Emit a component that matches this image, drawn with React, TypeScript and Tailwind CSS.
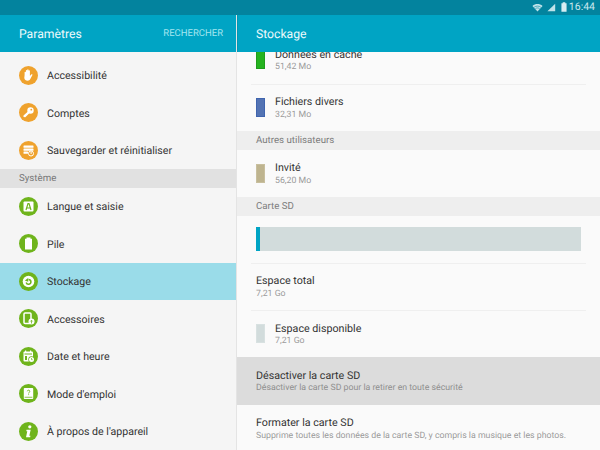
import React from "react";

const font: React.CSSProperties = { fontFamily: "Roboto, sans-serif", textRendering: "geometricPrecision" };

function Circle({ color, children }: { color: string; children: React.ReactNode }) {
  return (
    <svg width="19" height="19" viewBox="0 0 19 19" className="shrink-0">
      <circle cx="9.5" cy="9.5" r="9.5" fill={color} />
      {children}
    </svg>
  );
}

const O = "#efa22d";
const G = "#6fb41c";

const icons: Record<string, React.ReactNode> = {
  hand: (
    <path d="M5.600 9V6.300c0-.9 1.200-.9 1.300 0v1.900V4.600c0-.9 1.300-.9 1.300 0v3.300V3.900c0-.9 1.400-.9 1.400 0v4V4.800c0-.9 1.300-.9 1.300 0v5.200l1.300-1.500c.7-.7 1.600 0 1.100.7l-2 3.800c-.6 1-1.400 1.700-2.700 1.700-1.800 0-3-1-3.300-2.800z" fill="#fff" />
  ),
  key: (
    <g fill="#fff">
      <circle cx="11.500" cy="7.500" r="3.200" />
      <path d="M9.300 8.200l1.500 1.500-4.500 4.500-1.800-.2.000-1.500z" />
      <circle cx="12.300" cy="6.700" r=".9" fill={O} />
    </g>
  ),
  backup: (
    <g fill="#fff">
      <rect x="4.500" y="4.500" width="10" height="2.300" rx=".5" />
      <rect x="4.500" y="7.500" width="10" height="2.300" rx=".5" />
      <rect x="4.500" y="10.500" width="4.500" height="2.300" rx=".5" />
      <circle cx="12" cy="12.500" r="2.500" fill="none" stroke="#fff" strokeWidth="1" />
      <rect x="11.600" y="11" width="1" height="2" />
    </g>
  ),
  lang: (
    <g>
      <rect x="4.500" y="4.500" width="10" height="10" rx="1" fill="#fff" />
      <path d="M7 13l2-6.500h1L12 13M7.800 11h3.400" fill="none" stroke={G} strokeWidth="1.200" />
    </g>
  ),
  battery: <path d="M7.500 3.500h4v1.200h1.500v10.800H6V4.700h1.500z" fill="#fff" />,
  storage: (
    <g>
      <circle cx="9.500" cy="9.500" r="5.800" fill="#fff" />
      <path d="M9.500 7.500a2.400 2.400 0 1 1-2.300 3" fill="none" stroke={G} strokeWidth="1.500" />
      <path d="M5.800 8.600l3.400-2.600v3.800z" fill={G} />
    </g>
  ),
  acc: (
    <g>
      <rect x="5" y="4" width="7" height="10.500" rx="1" fill="none" stroke="#fff" strokeWidth="1.500" />
      <circle cx="12.500" cy="12.500" r="3" fill="#fff" />
      <path d="M12.500 14.500v-3M11.300 12.500l1.200-1.300 1.200 1.300" stroke={G} strokeWidth=".8" fill="none" />
    </g>
  ),
  date: (
    <g fill="#fff">
      <rect x="4.500" y="4.500" width="9.500" height="10" rx="1" />
      <rect x="6" y="3.500" width="1.200" height="2" />
      <rect x="11" y="3.500" width="1.200" height="2" />
      <rect x="5.500" y="6.500" width="7.500" height="1" fill={G} />
      <rect x="6" y="9" width="2" height="4" fill={G} />
      <circle cx="12.500" cy="12.500" r="3.200" fill={G} />
      <circle cx="12.500" cy="12.500" r="2.500" />
      <path d="M12.500 11v1.700h1.200" stroke={G} strokeWidth=".7" fill="none" />
    </g>
  ),
  guide: (
    <g>
      <rect x="4.800" y="4" width="9.400" height="11" rx=".8" fill="#fff" />
      <rect x="5.600" y="12.800" width="7.800" height=".8" fill={G} />
      <path d="M8.300 7.300c0-1.500 2.500-1.500 2.500 0 0 1-1.200 1-1.200 2.200M9.600 10.300v.8" stroke={G} strokeWidth=".9" fill="none" />
    </g>
  ),
  info: (
    <g fill="#fff">
      <circle cx="10.800" cy="4.800" r="1.600" />
      <path d="M7.500 7.800h4.200l-1.400 6h1.100l-.2 1.400H7l1.300-6H7.300z" />
    </g>
  ),
};

function NavRow({ icon, color = G, label, selected }: { icon: string; color?: string; label: string; selected?: boolean }) {
  return (
    <div className={`flex h-[37.5px] items-center gap-[9px] pl-[19px] ${selected ? "bg-[#9adce9]" : ""}`}>
      <Circle color={color}>{icons[icon]}</Circle>
      <span className="pt-[2px] text-[10.6px] text-[#333333]">{label}</span>
    </div>
  );
}

function NavSection({ label }: { label: string }) {
  return (
    <div className="flex h-[18.75px] items-center bg-[#e1e1e1] pl-[19px] pt-[1.5px] text-[9.7px] text-[#777777]">
      {label}
    </div>
  );
}

function Section({ label }: { label: string }) {
  return (
    <div className="flex h-[18.75px] items-center bg-[#eeeeee] pl-[19px] pt-[1.5px] text-[9.7px] text-[#7c7c7c]">
      {label}
    </div>
  );
}

function Divider() {
  return <div className="mx-[14px] -mb-px h-px bg-[#efefef]" />;
}

function Item({ title, sub, swatch, border, bg }: { title: string; sub: string; swatch?: string; border?: string; bg?: string }) {
  return (
    <div className={`flex h-[47.25px] items-center pl-[19px] ${bg ?? ""}`}>
      {swatch && <div className={`mr-[10px] h-[19px] w-[9px] shrink-0 border ${swatch} ${border}`} />}
      <div className="flex flex-col pt-[1.5px]">
        <span className="text-[10.7px] leading-[13.5px] text-[#333333]">{title}</span>
        <span className={`text-[8.75px] leading-[12px] ${bg ? "text-[#8f8f8f]" : "text-[#9a9a9a]"}`}>{sub}</span>
      </div>
    </div>
  );
}

export default function App() {
  return (
    <div className="flex h-[450px] w-[600px] flex-col overflow-hidden bg-[#fafafa]" style={font}>
      <div className="flex h-[14.500px] shrink-0 items-center justify-end bg-[#03839e] pr-[5px]">
        <svg width="11" height="9" viewBox="0 0 13 10" className="mr-[4px]">
          <path d="M.500 3.200C4 .200 9 .200 12.500 3.200L6.500 9.700z" fill="#bfe3ea" />
          <path d="M2.500 4.700c2.500-1.800 5.500-1.800 8 0" stroke="#03839e" strokeWidth=".7" fill="none" />
          <path d="M4 6.300c1.600-1 3.400-1 5 0" stroke="#03839e" strokeWidth=".7" fill="none" />
        </svg>
        <svg width="9" height="9" viewBox="0 0 11 10" className="mr-[5px]">
          <path d="M.500 9.500L10 .500v9z" fill="#bfe3ea" />
        </svg>
        <svg width="6" height="10" viewBox="0 0 7 11" className="mr-[2px]">
          <path d="M2 0h3v1h1.500v10H.500V1H2z" fill="#d5eef3" />
        </svg>
        <span className="text-[10.500px] leading-none text-[#cbe8ee]">16:44</span>
      </div>
      <div className="flex min-h-0 flex-1">
        <div className="flex w-[237px] shrink-0 flex-col border-r border-[#e4e4e4] bg-[#f5f5f5]">
          <div className="flex h-[37.500px] shrink-0 items-center justify-between bg-[#00a4c4] pl-[19px] pr-[13px] pt-[2px]">
            <span className="text-[12.2px] text-[#eefafc]">Paramètres</span>
            <span className="text-[9.500px] text-[#a5e6f0]">RECHERCHER</span>
          </div>
          <div className="flex flex-col pt-[4.250px]">
            <NavRow icon="hand" color={O} label="Accessibilité" />
            <NavRow icon="key" color={O} label="Comptes" />
            <NavRow icon="backup" color={O} label="Sauvegarder et réinitialiser" />
            <NavSection label="Système" />
            <NavRow icon="lang" label="Langue et saisie" />
            <NavRow icon="battery" label="Pile" />
            <NavRow icon="storage" label="Stockage" selected />
            <NavRow icon="acc" label="Accessoires" />
            <NavRow icon="date" label="Date et heure" />
            <NavRow icon="guide" label="Mode d'emploi" />
            <NavRow icon="info" label="À propos de l'appareil" />
          </div>
        </div>
        <div className="flex min-w-0 flex-1 flex-col">
          <div className="relative z-10 flex h-[37.500px] shrink-0 items-center border-l border-[#0396b3] bg-[#00a4c4] pl-[18px] pt-[2px]">
            <span className="text-[12.2px] text-[#eefafc]">Stockage</span>
          </div>
          <div className="min-h-0 flex-1 overflow-hidden">
            <div className="-mt-[15.750px] flex flex-col">
              <Item title="Données en cache" sub="51,42 Mo" swatch="bg-[#25b31f]" border="border-[#1f9c1b]" />
              <Divider />
              <Item title="Fichiers divers" sub="32,31 Mo" swatch="bg-[#5373b3]" border="border-[#3f64ae]" />
              <Section label="Autres utilisateurs" />
              <Item title="Invité" sub="56,20 Mo" swatch="bg-[#beb48f]" border="border-[#c8bf9e]" />
              <Section label="Carte SD" />
              <div className="flex h-[47.250px] items-center px-[19px]">
                <div className="flex h-[24px] w-full bg-[#d2dcdc]">
                  <div className="w-[3.500px] bg-[#00a4c4]" />
                </div>
              </div>
              <Divider />
              <Item title="Espace total" sub="7,21 Go" />
              <Divider />
              <Item title="Espace disponible" sub="7,21 Go" swatch="bg-[#d2dcdc]" border="border-[#d8e1e1]" />
              <Item title="Désactiver la carte SD" sub="Désactiver la carte SD pour la retirer en toute sécurité" bg="bg-[#dcdcdc]" />
              <Item title="Formater la carte SD" sub="Supprime toutes les données de la carte SD, y compris la musique et les photos." />
            </div>
          </div>
        </div>
      </div>
    </div>
  );
}
